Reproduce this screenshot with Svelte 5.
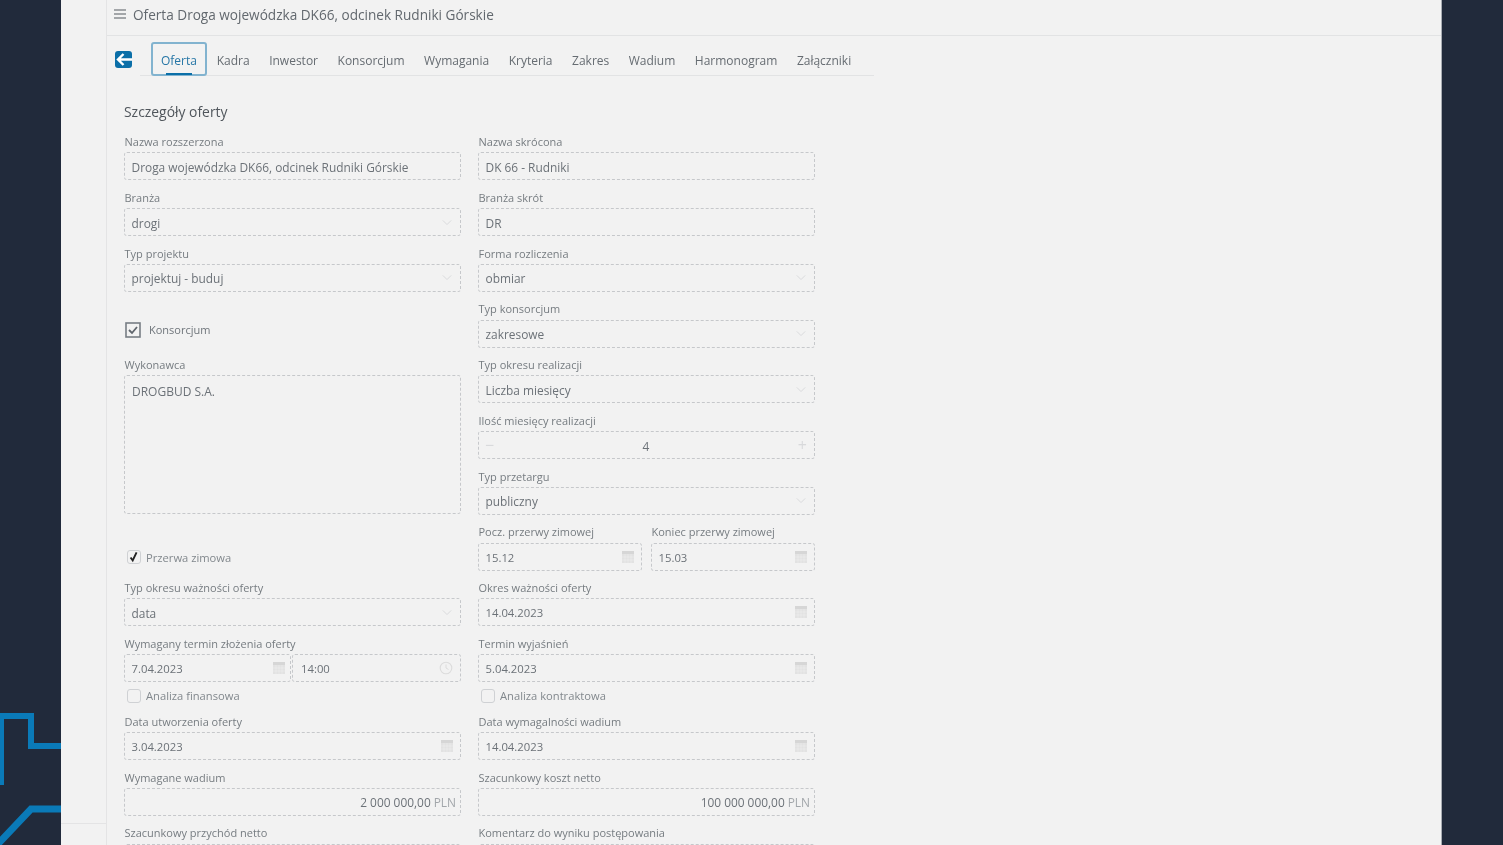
<script>
  const tabs = ['Oferta', 'Kadra', 'Inwestor', 'Konsorcjum', 'Wymagania', 'Kryteria', 'Zakres', 'Wadium', 'Harmonogram', 'Załączniki'];
</script>

{#snippet chevron()}
  <svg class="ico chev" viewBox="0 0 12 8" width="10" height="7"><path d="M1 1.5l5 5 5-5" fill="none" stroke="#d9dadc" stroke-width="1.2"/></svg>
{/snippet}

{#snippet calendar()}
  <svg class="ico" viewBox="0 0 12 12" width="12" height="12">
    <rect x="0" y="0" width="12" height="3" fill="#d6d6d6"/>
    <rect x="0" y="3" width="12" height="9" fill="#e2e2e2"/>
    <path d="M0 6h12M0 9h12M3 3v9M6 3v9M9 3v9" stroke="#eeeeee" stroke-width="0.6"/>
  </svg>
{/snippet}

{#snippet field(label, value, icon, short)}
  <div class="field" class:short>
    <div class="label">{label}</div>
    <div class="input">
      <span class="val" class:date={icon === 'cal'}>{value}</span>
      {#if icon === 'chev'}{@render chevron()}{/if}
      {#if icon === 'cal'}{@render calendar()}{/if}
    </div>
  </div>
{/snippet}

{#snippet money(label, value)}
  <div class="field">
    <div class="label">{label}</div>
    <div class="input money"><span class="val">{value}</span><span class="val cur">PLN</span></div>
  </div>
{/snippet}

{#snippet check(label)}
  <div class="analiza">
    <span class="box"></span>
    <span>{label}</span>
  </div>
{/snippet}

<div class="page">
  <svg class="logo" viewBox="0 0 61 135" width="61" height="135">
    <path d="M1 785V716H31V746H61" fill="none" stroke="#0a7ab8" stroke-width="6" transform="translate(0 -710)"/>
    <path d="M61 809H31L-3 845" fill="none" stroke="#0a7ab8" stroke-width="7" transform="translate(0 -710)"/>
  </svg>

  <div class="app">
    <aside class="side">
      <div class="side-foot"></div>
    </aside>

    <main class="main">
      <header class="top">
        <svg viewBox="0 0 12 10" width="12" height="10"><path d="M0 1h12M0 5h12M0 9h12" stroke="#555b61" stroke-width="1.2"/></svg>
        <span>Oferta Droga wojewódzka DK66, odcinek Rudniki Górskie</span>
      </header>

      <div class="tabbar">
        <svg class="back" viewBox="0 0 17 17" width="17" height="17">
          <rect width="17" height="17" rx="3" fill="#0b6fa8"/>
          <path d="M8.5 3L3 8.5l5.5 5.5M3 8.5h14" fill="none" stroke="#fff" stroke-width="2.4"/>
        </svg>
        <nav class="tabs">
          {#each tabs as t, i}
            <div class="tab" class:active={i === 0}>{t}</div>
          {/each}
        </nav>
      </div>

      <section class="content">
        <h2>Szczegóły oferty</h2>
        <div class="cols">
          <div class="col">
            {@render field('Nazwa rozszerzona', 'Droga wojewódzka DK66, odcinek Rudniki Górskie')}
            {@render field('Branża', 'drogi', 'chev')}
            {@render field('Typ projektu', 'projektuj - buduj', 'chev')}

            <div class="konsorcjum">
              <svg viewBox="0 0 16 16" width="16" height="16">
                <rect x="1" y="1" width="14" height="14" fill="none" stroke="#777d84" stroke-width="1.6"/>
                <path d="M4 8l3 3 5-6" fill="none" stroke="#5f656c" stroke-width="1.8"/>
              </svg>
              <span>Konsorcjum</span>
            </div>

            <div class="wykonawca">
              <div class="label">Wykonawca</div>
              <div class="area">DROGBUD S.A.</div>
            </div>

            <div class="przerwa">
              <span class="box checked">
                <svg viewBox="0 0 14 14" width="12" height="12"><path d="M3 7.5l2.5 3.5 4.5-9.5" fill="none" stroke="#222" stroke-width="2.2"/></svg>
              </span>
              <span>Przerwa zimowa</span>
            </div>

            {@render field('Typ okresu ważności oferty', 'data', 'chev')}

            <div class="field short">
              <div class="label">Wymagany termin złożenia oferty</div>
              <div class="pair">
                <div class="input"><span class="val date">7.04.2023</span>{@render calendar()}</div>
                <div class="input">
                  <span class="val date">14:00</span>
                  <svg class="ico" viewBox="0 0 14 14" width="14" height="14">
                    <circle cx="7" cy="7" r="5.8" fill="none" stroke="#dcdcdc" stroke-width="1.1"/>
                    <path d="M7 3.5V7l2.5 1.5" fill="none" stroke="#dcdcdc" stroke-width="1"/>
                  </svg>
                </div>
              </div>
            </div>
            {@render check('Analiza finansowa')}
            {@render field('Data utworzenia oferty', '3.04.2023', 'cal')}
            {@render money('Wymagane wadium', '2 000 000,00')}
            {@render field('Szacunkowy przychód netto', '')}
          </div>

          <div class="col">
            {@render field('Nazwa skrócona', 'DK 66 - Rudniki')}
            {@render field('Branża skrót', 'DR')}
            {@render field('Forma rozliczenia', 'obmiar', 'chev')}
            {@render field('Typ konsorcjum', 'zakresowe', 'chev')}
            {@render field('Typ okresu realizacji', 'Liczba miesięcy', 'chev')}

            <div class="field">
              <div class="label">Ilość miesięcy realizacji</div>
              <div class="input stepper">
                <span class="step">−</span>
                <span class="val">4</span>
                <span class="step">+</span>
              </div>
            </div>

            {@render field('Typ przetargu', 'publiczny', 'chev')}

            <div class="split">
              {@render field('Pocz. przerwy zimowej', '15.12', 'cal')}
              {@render field('Koniec przerwy zimowej', '15.03', 'cal')}
            </div>

            {@render field('Okres ważności oferty', '14.04.2023', 'cal')}
            {@render field('Termin wyjaśnień', '5.04.2023', 'cal', true)}
            {@render check('Analiza kontraktowa')}
            {@render field('Data wymagalności wadium', '14.04.2023', 'cal')}
            {@render money('Szacunkowy koszt netto', '100 000 000,00')}
            {@render field('Komentarz do wyniku postępowania', '')}
          </div>
        </div>
      </section>
    </main>
  </div>
</div>

<style>
  :global(body) {
    margin: 0;
    overflow: hidden;
    background: #212a3b;
  }

  .page {
    position: relative;
    height: 845px;
    overflow: hidden;
    padding: 0 61px;
    background: #212a3b;
    font-family: "Open Sans", "Noto Sans", sans-serif;
    color: #70767c;
    box-sizing: border-box;
    filter: blur(0.35px);
  }

  .logo {
    position: absolute;
    left: 0;
    top: 710px;
  }

  .app {
    display: flex;
    width: 1381px;
    height: 845px;
    background: #f2f2f2;
    border-right: 1px solid #a9adb3;
    box-sizing: border-box;
  }

  .side {
    position: relative;
    width: 45px;
    flex: none;
    border-right: 1px solid #e4e4e5;
  }

  .side-foot {
    position: absolute;
    left: 0;
    right: 0;
    top: 823px;
    border-top: 1px solid #e4e4e5;
  }

  .main {
    flex: 1;
    min-width: 0;
  }

  .top {
    display: flex;
    align-items: center;
    gap: 7px;
    height: 36px;
    padding: 0 0 7px 7px;
    box-sizing: border-box;
    border-bottom: 1px solid #e2e3e4;
    font-size: 13.6px;
    color: #62686e;
  }

  .tabbar {
    display: flex;
    align-items: center;
    padding: 6px 0 0 8px;
    height: 34px;
  }

  .back {
    flex: none;
  }

  .tabs {
    display: flex;
    width: 734px;
    margin-left: 8px;
    padding-left: 11px;
    height: 34px;
    box-sizing: border-box;
    border-bottom: 1px solid #e2e3e4;
  }

  .tab {
    position: relative;
    display: flex;
    align-items: center;
    padding: 2px 9.75px 0;
    font-size: 12px;
    color: #666c72;
    height: 34px;
    box-sizing: border-box;
  }

  .tab.active {
    color: #2676a6;
    border: 2px solid #82b3cf;
    border-radius: 3px;
    padding: 2px 8px 0;
    font-weight: 500;
  }

  .tab.active::after {
    content: '';
    position: absolute;
    left: 13px;
    right: 13px;
    bottom: -1px;
    height: 2px;
    background: #0b6fa8;
  }

  .content {
    padding: 0 0 0 17px;
  }

  h2 {
    margin: 0;
    height: 58px;
    padding-top: 27px;
    box-sizing: border-box;
    font-size: 13.9px;
    font-weight: 500;
    line-height: 18px;
    color: #50565c;
  }

  .cols {
    display: grid;
    grid-template-columns: 337px 337px;
    column-gap: 17px;
  }

  .col {
    min-width: 0;
  }

  .field {
    height: 55.75px;
    min-width: 0;
  }

  .field.short {
    height: 46px;
  }

  .label {
    height: 18.25px;
    padding-left: 0.5px;
    font-size: 11px;
    line-height: 15px;
    color: #767c81;
    white-space: nowrap;
  }

  .input {
    display: flex;
    align-items: center;
    justify-content: space-between;
    height: 28px;
    padding: 0 7px 0 6.5px;
    box-sizing: border-box;
    border: 1px dashed #c6c8cb;
    border-radius: 3px;
    font-size: 11.9px;
    color: #6c7278;
    min-width: 0;
  }

  .val {
    white-space: nowrap;
    margin-top: 1px;
  }

  .val.date {
    font-size: 11.3px;
  }

  .ico {
    flex: none;
  }

  .chev {
    margin-right: 1px;
  }

  .money {
    justify-content: flex-end;
    gap: 3px;
    padding-right: 4px;
  }

  .cur {
    color: #a2a6aa;
  }

  .stepper {
    padding: 0 7px 0 6px;
  }

  .step {
    color: #d8d9db;
    font-size: 16px;
    line-height: 16px;
  }

  .pair {
    display: grid;
    grid-template-columns: 167px 1fr;
    column-gap: 1px;
  }

  .pair .input:first-child {
    padding-right: 5px;
  }

  .pair .input:last-child {
    padding-left: 8px;
  }

  .split {
    display: grid;
    grid-template-columns: 164px 164px;
    column-gap: 9px;
  }

  .konsorcjum {
    display: flex;
    align-items: center;
    gap: 8px;
    height: 55.75px;
    padding: 1px 0 0 1px;
    box-sizing: border-box;
    font-size: 11px;
    color: #6f757b;
  }

  .wykonawca {
    height: 167.5px;
  }

  .area {
    height: 139px;
    padding: 7px 7px;
    box-sizing: border-box;
    border: 1px dashed #c6c8cb;
    border-radius: 3px;
    font-size: 12px;
    color: #6c7278;
  }

  .przerwa {
    display: flex;
    align-items: center;
    gap: 5px;
    height: 55.5px;
    padding: 10px 0 0 3px;
    box-sizing: border-box;
    font-size: 11.2px;
    color: #82888d;
  }

  .box {
    display: block;
    width: 14px;
    height: 14px;
    flex: none;
    box-sizing: border-box;
    border: 1px solid #cfd1d4;
    border-radius: 3px;
  }

  .box.checked svg {
    display: block;
  }

  .analiza {
    display: flex;
    align-items: center;
    gap: 5px;
    height: 32px;
    padding: 0 0 4px 3px;
    box-sizing: border-box;
    font-size: 11.2px;
    color: #82888d;
  }
</style>
